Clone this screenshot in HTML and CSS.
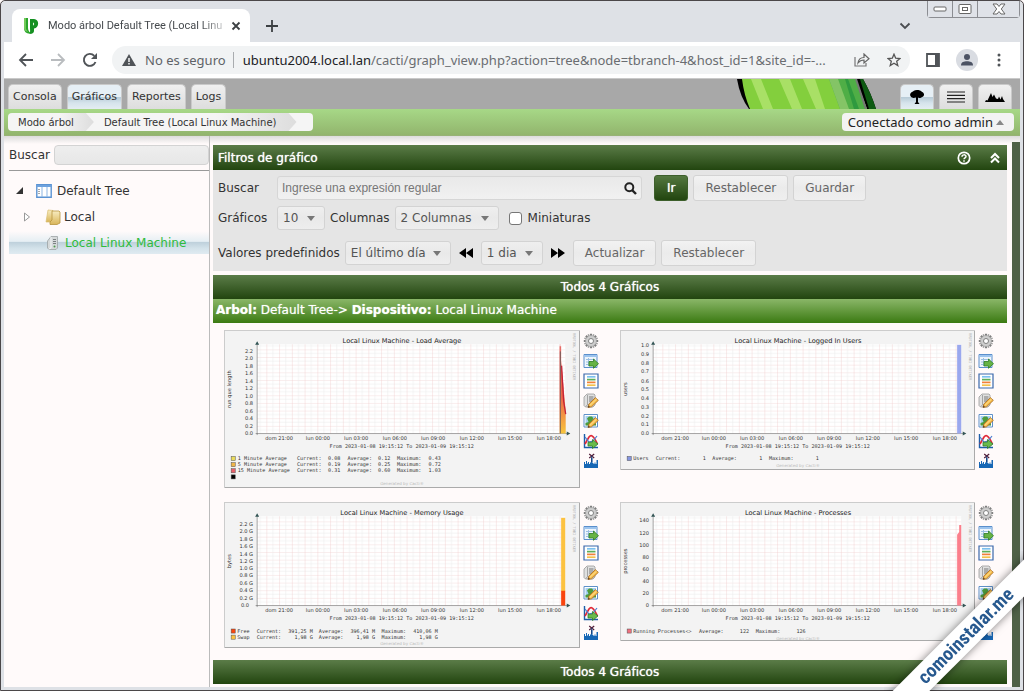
FILE: index.html
```html
<!DOCTYPE html>
<html lang="es">
<head>
<meta charset="utf-8">
<title>Modo árbol Default Tree (Local Linux Machine)</title>
<link rel="stylesheet" href="styles.css">
</head>
<body>
<svg class="defs" aria-hidden="true">
  <defs>
    <linearGradient id="g-load" x1="0" y1="0" x2="0" y2="1"><stop offset="0" stop-color="#e2554f"/><stop offset=".6" stop-color="#ee6a4a"/><stop offset="1" stop-color="#f7c53c"/></linearGradient>
    <linearGradient id="g-folder" x1="0" y1="0" x2="0" y2="1"><stop offset="0" stop-color="#f8ecc0"/><stop offset="1" stop-color="#d9b559"/></linearGradient>
    <pattern id="p-hours" x="83" y="0" width="25" height="200" patternUnits="userSpaceOnUse">
      <path d="M.5 0V200" stroke="#f2c9c9"/><path d="M13 0V200" stroke="#e9e9e9"/>
    </pattern>
    <pattern id="p-rows" x="0" y="203" width="10" height="15" patternUnits="userSpaceOnUse">
      <path d="M0 .5H10" stroke="#f3d6d6"/><path d="M0 8H10" stroke="#ededed"/>
    </pattern>
    <symbol id="plot" viewBox="0 0 697 220">
      <path fill="#fff" d="M65 28H669V203H65z"/>
      <path fill="url(#p-rows)" d="M65 28H669V203H65z"/>
      <path fill="url(#p-hours)" d="M65 28H669V203H65z"/>
      <path d="M65 26V206M62 203H674" stroke="#555" fill="none"/>
      <path d="M61 29L65 22L69 29zM672 199L679 203L672 207z" fill="#355"/>
    </symbol>
    <symbol id="i-gear" viewBox="0 0 16 16">
      <path d="M8 .8V15.200M.8 8H15.200M2.900 2.900L13.100 13.100M13.100 2.900L2.900 13.100" stroke="#7f7f7f" stroke-width="2.200"/>
      <path d="M5.200 1.300L10.800 14.700M10.800 1.300L5.200 14.700M1.300 5.200L14.700 10.800M1.300 10.800L14.700 5.200" stroke="#a2a2a2" stroke-width="1.400"/>
      <circle cx="8" cy="8" r="5.400" fill="#cdcdcd" stroke="#a8a8a8" stroke-width=".6"/><circle cx="8" cy="8" r="2.500" fill="#fff" stroke="#808080"/>
    </symbol>
    <symbol id="i-export" viewBox="0 0 16 16">
      <path d="M1 1.500H14V14.500H1z" fill="#eef5fc" stroke="#5a8fcc"/><path d="M1.500 2H13.500V4H1.500z" fill="#9dc4ee"/>
      <path d="M3 6.500H12M3 9H9M3 11.500H8M5.500 5V13" stroke="#9bbfe2"/>
      <path d="M6 8.500H10.500V6L15.500 10.700L10.500 15.300V13H6z" fill="#66b345" stroke="#2f7d24" stroke-width=".8"/>
    </symbol>
    <symbol id="i-list" viewBox="0 0 16 16">
      <path d="M1 1H15V15H1z" fill="#fff" stroke="#3a68ab" stroke-width="1.200"/>
      <path d="M4 3.800H12.500" stroke="#7cc0ee" stroke-width="1.700"/><path d="M4 6.600H12.500" stroke="#5dae58" stroke-width="1.700"/>
      <path d="M4 9.400H12.500" stroke="#f0813a" stroke-width="1.700"/><path d="M4 12.200H12.500" stroke="#f3c14b" stroke-width="1.700"/>
    </symbol>
    <symbol id="i-pencil" viewBox="0 0 16 16">
      <path d="M5 14.500L5.800 11L12.500 4.600L15.300 7.400L8.500 13.800z" fill="#f6bd4a" stroke="#a4661f" stroke-width=".8"/>
      <path d="M7 12.300L13.600 6" stroke="#fde3a0"/><path d="M5 14.500L5.400 12.500L7 14z" fill="#4a3a2a"/>
    </symbol>
    <symbol id="i-device-edit" viewBox="0 0 16 16">
      <path d="M4 1H11L12 2V12L10 14H2.500L1 12.500V4z" fill="#e0e0e0" stroke="#999" stroke-width=".8"/><path d="M4.500 2V12L2.500 13.500" stroke="#a5a5a5" fill="none"/><path d="M6 4H10.500M6 6H10.500M6 8H9" stroke="#777"/>
      <use href="#i-pencil"/>
    </symbol>
    <symbol id="i-image-edit" viewBox="0 0 16 16">
      <path d="M1 1.500H14.500V14H1z" fill="#fff" stroke="#5f91c9"/><path d="M2.500 3H13V12.500H2.500z" fill="#a6d0f1"/>
      <path d="M2.500 12.500V10L5.500 9L5 7.500L4 5.500L6 3.500L9 3.500L10.500 5.500L9 8L13 10.500V12.500z" fill="#4e9b3c"/>
      <use href="#i-pencil"/>
    </symbol>
    <symbol id="i-trend" viewBox="0 0 16 16">
      <path d="M1.500 1V14.500H15" stroke="#1d5fa8" stroke-width="1.400" fill="none"/>
      <path d="M2 11L6 4C8 1.500 10 1.800 14.500 11" stroke="#e02a38" stroke-width="1.700" fill="none"/>
      <path d="M2 4L6 9L10 8L14 3" stroke="#4a7ed0" stroke-width="1.200" fill="none"/>
      <path d="M5 9.200H9.500V6.500L15 11L9.500 15.500V13H5z" fill="#6abb4b" stroke="#2d7b2c" stroke-width=".8"/>
    </symbol>
    <symbol id="i-spike" viewBox="0 0 16 16">
      <path d="M1 15V9H2V11H3V8H4V10.500H5V9H6V11H7V9.500H8V5H9.500V10H10.500V11H11.500V9.500H12.500V11H13.500V7H15V15z" fill="#1767b5"/>
      <path d="M6.200 1L11.200 5M11.200 1L6.200 5" stroke="#501c38" stroke-width="1.200"/><path d="M8.700 3V9" stroke="#1d3f78"/>
    </symbol>
  </defs>
</svg>

<div class="window">
  <header class="tabstrip">
    <div class="tab">
      <svg class="favicon" viewBox="0 0 16 18"><path d="M1 1H5V11C5 14 7 16 9 16.500C4 17.500 1 15 1 11z" fill="#2aa52b"/><path d="M7 2H11C16.500 2 16.500 11 11 11.500V14C11 16 9 17 6.500 16.500C7.500 15 7 13 7 11z" fill="#159022"/><path d="M10 5.500C11.500 5.500 11.500 8.500 10 8.500z" fill="#e8f6e4"/><path d="M1 1H3V12L5 15C2 14 1 13 1 11z" fill="#72c95a"/></svg>
      <span class="tab-title">Modo árbol Default Tree (Local Linu</span>
      <button class="bare" aria-label="Cerrar pestaña"><svg width="10" height="10" viewBox="0 0 10 10"><path d="M1.500 1.500L8.500 8.500M8.500 1.500L1.500 8.500" stroke="#3c4043" stroke-width="1.800"/></svg></button>
    </div>
    <button class="bare newtab" aria-label="Nueva pestaña"><svg width="12" height="12" viewBox="0 0 12 12"><path d="M6 0V12M0 6H12" stroke="#3c4043" stroke-width="1.800"/></svg></button>
    <button class="bare chevron" aria-label="Buscar pestañas"><svg width="12" height="8" viewBox="0 0 12 8"><path d="M1.500 1.500L6 6L10.500 1.500" fill="none" stroke="#4a4d51" stroke-width="1.800"/></svg></button>
    <div class="winbuttons">
      <button aria-label="Minimizar"><svg width="14" height="6" viewBox="0 0 14 6"><rect x="1" y="1" width="12" height="4" rx="1" fill="#fff" stroke="#666"/></svg></button>
      <button aria-label="Maximizar"><svg width="14" height="10" viewBox="0 0 14 10"><rect x="1" y=".5" width="12" height="9" rx="1" fill="#fff" stroke="#666"/><rect x="4.500" y="3.500" width="5" height="3" fill="#fff" stroke="#666"/></svg></button>
      <button class="wide" aria-label="Cerrar"><svg width="14" height="12" viewBox="0 0 14 12"><path d="M1 1H5L7 3.500L9 1H13L9.300 6L13 11H9L7 8.500L5 11H1L4.700 6z" fill="#fff" stroke="#666"/></svg></button>
    </div>
  </header>

  <div class="toolbar">
    <button class="bare tool" aria-label="Atrás"><svg width="16" height="14" viewBox="0 0 16 14"><path d="M15 7H2M8 1L2 7L8 13" fill="none" stroke="#505458" stroke-width="1.800"/></svg></button>
    <button class="bare tool" aria-label="Adelante"><svg width="16" height="14" viewBox="0 0 16 14"><path d="M1 7H14M8 1L14 7L8 13" fill="none" stroke="#b9bcbf" stroke-width="1.800"/></svg></button>
    <button class="bare tool" aria-label="Recargar"><svg width="16" height="16" viewBox="0 0 16 16"><path d="M13.500 10A6 6 0 1 1 12.300 3.800" fill="none" stroke="#505458" stroke-width="1.900"/><path d="M15 1V7H9z" fill="#505458"/></svg></button>
    <div class="omnibox">
      <svg width="14" height="14" viewBox="0 0 14 14"><path d="M7 1L14 13H0z" fill="#505458"/><path d="M7 5V9M7 10V11.500" stroke="#fff" stroke-width="1.400"/></svg>
      <span class="insecure">No es seguro</span>
      <span class="bar"></span>
      <span class="url"><b>ubuntu2004.local.lan</b>/cacti/graph_view.php?action=tree&amp;node=tbranch-4&amp;host_id=1&amp;site_id=-...</span>
      <button class="bare share" aria-label="Compartir"><svg width="16" height="14" viewBox="0 0 16 14"><path d="M1 4V13H12V10" fill="none" stroke="#777" stroke-width="1.200"/><path d="M4 10C4.500 6 7 4.500 10 4.500V1L15 5.800L10 10V7C7 7 5.500 8 4 10z" fill="none" stroke="#666" stroke-width="1.200"/></svg></button>
      <button class="bare star" aria-label="Favorito"><svg width="14" height="14" viewBox="0 0 14 14"><path d="M7 1.200L8.700 5.200L13 5.500L9.700 8.300L10.800 12.600L7 10.300L3.200 12.600L4.300 8.300L1 5.500L5.300 5.200z" fill="none" stroke="#555" stroke-width="1.300"/></svg></button>
    </div>
    <button class="bare" aria-label="Panel lateral"><svg width="14" height="14" viewBox="0 0 14 14"><path d="M1 1H13V13H1z" fill="#fff" stroke="#505458" stroke-width="1.800"/><path d="M9 1H13V13H9z" fill="#505458"/></svg></button>
    <button class="bare" aria-label="Perfil"><svg width="22" height="22" viewBox="0 0 22 22"><circle cx="11" cy="11" r="11" fill="#d9dce2"/><circle cx="11" cy="8" r="3" fill="#4c5364"/><path d="M5 16.500C5 13 8 12.300 11 12.300S17 13 17 16.500z" fill="#4c5364"/></svg></button>
    <button class="bare dots" aria-label="Menú"><svg width="4" height="14" viewBox="0 0 4 14"><circle cx="2" cy="2" r="1.500" fill="#505458"/><circle cx="2" cy="7" r="1.500" fill="#505458"/><circle cx="2" cy="12" r="1.500" fill="#505458"/></svg></button>
  </div>

  <nav class="appbar">
    <a class="apptab" href="#">Consola</a>
    <a class="apptab selected" href="#">Gráficos</a>
    <a class="apptab" href="#">Reportes</a>
    <a class="apptab" href="#">Logs</a>
    <svg class="cactus" viewBox="0 0 140 30" aria-hidden="true">
      <path d="M0 0H126Q134 14 139 30H12Q3 18 0 0z" fill="#000"/>
      <path d="M126 0Q134 14 139 30H132L123 0z" fill="#0e5a12"/>
      <path d="M5 0H119Q124 14 130 30H13Q7 16 5 0z" fill="#83cf3d"/>
      <path d="M14 0H24L36 30H26zM42 0H53L65 30H55zM66 0H78L88 30H79z" fill="#a9e066"/>
      <path d="M92 0H119L130 30H103z" fill="#4fae46"/><path d="M92 0H101L112 30H103z" fill="#84c466"/><path d="M108 0H111L122 30H117z" fill="#2f9a3f"/>
      <path d="M119 0L129 30" stroke="#777" stroke-width="2"/>
    </svg>
    <a class="apptab pic selected" href="#" aria-label="Árbol"><svg width="16" height="16" viewBox="0 0 16 16"><path d="M8 1C5 1 4.500 2.500 3 3C.5 4 .5 7.500 3 8.500C4.500 9.500 6 8.500 7 8.500V13L5.500 15H10.500L9 13V8.500C11 9.500 12 9 13 8C16 7.500 15.500 3.500 13 3C12 1.500 10 1 8 1z"/></svg></a>
    <a class="apptab pic" href="#" aria-label="Lista"><svg width="18" height="12" viewBox="0 0 18 12"><path d="M0 1H18M0 4.300H18M0 7.700H18M0 11H18" stroke="#222" stroke-width="1.200"/></svg></a>
    <a class="apptab pic" href="#" aria-label="Vista previa"><svg width="20" height="10" viewBox="0 0 20 10"><path d="M0 10L1 8L2.500 8.500L6 1L7.500 5L9 2.500L11 6.500L13 7L14 4.500L15.500 7.500L17 4L18 7L20 10z"/></svg></a>
  </nav>

  <div class="crumbbar">
    <ol class="crumbs">
      <li><a href="#">Modo árbol</a></li>
      <li><a href="#">Default Tree (Local Linux Machine)</a></li>
    </ol>
    <button class="user">Conectado como admin <svg width="8" height="5" viewBox="0 0 8 5"><path d="M0 5L4 0L8 5z" fill="#888"/></svg></button>
  </div>

  <div class="body">
    <aside class="side">
      <div class="side-search"><label for="tree-q">Buscar</label><input id="tree-q" type="text"></div>
      <ul class="tree">
        <li class="l1"><svg width="8" height="8" viewBox="0 0 8 8"><path d="M7 0V7H0z" fill="#333"/></svg>
          <svg width="16" height="14" viewBox="0 0 16 14"><path d="M.8.800H15.200V13.200H.8z" fill="#fff" stroke="#5b93d3" stroke-width="1.400"/><path d="M1 1H15V3H1z" fill="#6ea2de"/><path d="M6 3V13M11 3V13" stroke="#8db5e4"/><path d="M3 5V11" stroke="#555" stroke-dasharray="1 1"/></svg>
          <a href="#">Default Tree</a></li>
        <li class="l2"><svg width="8" height="10" viewBox="0 0 8 10"><path d="M1.500 1L6.500 5L1.500 9z" fill="#fff" stroke="#999"/></svg>
          <svg width="16" height="16" viewBox="0 0 16 16"><path d="M3 1L8 1.500V11L6 13H1z" fill="url(#g-folder)" stroke="#d8bd70" stroke-width=".7"/><path d="M7 2H14L15 3V14L12 15.500H5V13L7 11z" fill="url(#g-folder)" stroke="#b8943f" stroke-width=".8"/></svg>
          <a href="#">Local</a></li>
        <li class="l3"><svg width="16" height="16" viewBox="0 0 16 16"><path d="M6 1.500H12.500V13L11 14.500H4L2.500 13V6z" fill="#d5d9da" stroke="#9da3a5" stroke-width=".8"/><path d="M6 2V13L4 14" stroke="#f4f6f6" fill="none"/><path d="M8 4.500H11M8 6.500H11M8 8.500H11" stroke="#7b8082"/><circle cx="9.500" cy="11.500" r="1" fill="#4c9a4c"/></svg>
          <a href="#">Local Linux Machine</a></li>
      </ul>
    </aside>

    <main class="main">
      <h1 class="bar-dark bar-title"><span>Filtros de gráfico</span>
        <a href="#" aria-label="Ayuda"><svg width="14" height="14" viewBox="0 0 14 14"><circle cx="7" cy="7" r="5.700" fill="none" stroke="#fff" stroke-width="1.700"/><path d="M5 5.700C5 3.300 9 3.300 9 5.500C9 7 7 6.800 7 8.300M7 9.300V10.700" fill="none" stroke="#fff" stroke-width="1.500"/></svg></a>
        <a href="#" aria-label="Plegar"><svg width="10" height="12" viewBox="0 0 10 12"><path d="M1 6L5 2L9 6M1 10.500L5 6.500L9 10.500" fill="none" stroke="#fff" stroke-width="2"/></svg></a>
      </h1>
      <form class="filters" onsubmit="return false">
        <div class="frow">
          <label class="lead" for="q">Buscar</label>
          <span class="search"><input id="q" type="text" placeholder="Ingrese una expresión regular"><svg width="13" height="13" viewBox="0 0 13 13"><circle cx="5.300" cy="5.300" r="4" fill="none" stroke="#222" stroke-width="2"/><path d="M8 8L12 12" stroke="#222" stroke-width="2.400"/></svg></span>
          <button class="btn go">Ir</button><button class="btn">Restablecer</button><button class="btn">Guardar</button>
        </div>
        <div class="frow">
          <label class="lead" for="n">Gráficos</label>
          <span class="sel w-n"><select id="n"><option>10</option></select></span>
          <label for="cols">Columnas</label>
          <span class="sel w-c"><select id="cols"><option>2 Columnas</option></select></span>
          <label class="check"><input type="checkbox"> Miniaturas</label>
        </div>
        <div class="frow second">
          <label for="preset">Valores predefinidos</label>
          <span class="sel w-p"><select id="preset"><option>El último día</option></select></span>
          <button class="bare shift" aria-label="Retroceder"><svg width="14" height="10" viewBox="0 0 14 10"><path d="M7 0V10L0 5zM14 0V10L7 5z"/></svg></button>
          <span class="sel w-d"><select aria-label="Intervalo"><option>1 dia</option></select></span>
          <button class="bare shift" aria-label="Avanzar"><svg width="14" height="10" viewBox="0 0 14 10"><path d="M0 0V10L7 5zM7 0V10L14 5z"/></svg></button>
          <button class="btn">Actualizar</button><button class="btn">Restablecer</button>
        </div>
      </form>

      <div class="bar-dark bar-count">Todos 4 Gráficos</div>
      <h2 class="bar-green"><b>Arbol:</b> Default Tree-&gt; <b>Dispositivo:</b> Local Linux Machine</h2>

      <div class="graphs">
        <article class="graph">
          <svg class="chart" viewBox="0 0 697 309">
            <use href="#plot" width="697" height="220"/>
            <path d="M658 203V32H661V60L670 160V203z" fill="url(#g-load)"/><path d="M659 203V28" stroke="#f2a0a0"/><path d="M659.500 203V42" stroke="#555" stroke-width="1.500"/><path d="M662 70L666 140L670 165" stroke="#c22338" stroke-width="2.500" fill="none"/>
            <text class="t" x="349" y="25">Local Linux Machine - Load Average</text>
            <g class="y"><text x="57" y="206">0.0</text><text x="57" y="192">0.2</text><text x="57" y="177">0.4</text><text x="57" y="162">0.6</text><text x="57" y="148">0.8</text><text x="57" y="133">1.0</text><text x="57" y="118">1.2</text><text x="57" y="104">1.4</text><text x="57" y="89">1.6</text><text x="57" y="74">1.8</text><text x="57" y="59">2.0</text><text x="57" y="45">2.2</text></g>
            <g class="x"><text x="108" y="215">dom 21:00</text><text x="184" y="215">lun 00:00</text><text x="259" y="215">lun 03:00</text><text x="335" y="215">lun 06:00</text><text x="410" y="215">lun 09:00</text><text x="486" y="215">lun 12:00</text><text x="561" y="215">lun 15:00</text><text x="637" y="215">lun 18:00</text></g>
            <text class="v" transform="translate(13 116) rotate(-90)">run que length</text>
            <text class="w" transform="translate(684 6) rotate(90)">RRDTOOL / TOBI OETIKER</text>
            <text class="m" x="207" y="231">From 2023-01-08 19:15:12 To 2023-01-09 19:15:12</text>
            <g class="k"><rect x="14" y="248" width="8" height="8" fill="#eadb5c"/><rect x="14" y="260" width="8" height="8" fill="#efb548"/><rect x="14" y="272" width="8" height="8" fill="#e8606a"/><rect x="14" y="284" width="8" height="8"/></g>
            <g class="m"><text x="27" y="255">1 Minute Average</text><text x="143" y="255">Current:</text><text x="204" y="255">0.08</text><text x="242" y="255">Average:</text><text x="302" y="255">0.12</text><text x="339" y="255">Maximum:</text><text x="401" y="255">0.43</text>
            <text x="27" y="267">5 Minute Average</text><text x="143" y="267">Current:</text><text x="204" y="267">0.19</text><text x="242" y="267">Average:</text><text x="302" y="267">0.25</text><text x="339" y="267">Maximum:</text><text x="401" y="267">0.72</text>
            <text x="27" y="279">15 Minute Average</text><text x="143" y="279">Current:</text><text x="204" y="279">0.31</text><text x="242" y="279">Average:</text><text x="302" y="279">0.60</text><text x="339" y="279">Maximum:</text><text x="401" y="279">1.03</text></g>
            <text class="f" x="349" y="304">Generated by Cacti®</text>
          </svg>
          <div class="tools">
            <a href="#" aria-label="Opciones"><svg><use href="#i-gear"/></svg></a><a href="#" aria-label="Exportar CSV"><svg><use href="#i-export"/></svg></a><a href="#" aria-label="Intervalos"><svg><use href="#i-list"/></svg></a><a href="#" aria-label="Editar dispositivo"><svg><use href="#i-device-edit"/></svg></a><a href="#" aria-label="Editar plantilla"><svg><use href="#i-image-edit"/></svg></a><a href="#" aria-label="Tiempo real"><svg><use href="#i-trend"/></svg></a><a href="#" aria-label="Eliminar picos"><svg><use href="#i-spike"/></svg></a>
          </div>
        </article>

        <article class="graph">
          <svg class="chart" viewBox="0 0 697 274">
            <use href="#plot" width="697" height="220"/>
            <path d="M661 29H669V203H661z" fill="#9aa8ee"/>
            <text class="t" x="349" y="25">Local Linux Machine - Logged In Users</text>
            <g class="y"><text x="57" y="206">0.0</text><text x="57" y="189">0.1</text><text x="57" y="172">0.2</text><text x="57" y="154">0.3</text><text x="57" y="137">0.4</text><text x="57" y="120">0.5</text><text x="57" y="103">0.6</text><text x="57" y="85">0.7</text><text x="57" y="68">0.8</text><text x="57" y="51">0.9</text><text x="57" y="34">1.0</text></g>
            <g class="x"><text x="108" y="215">dom 21:00</text><text x="184" y="215">lun 00:00</text><text x="259" y="215">lun 03:00</text><text x="335" y="215">lun 06:00</text><text x="410" y="215">lun 09:00</text><text x="486" y="215">lun 12:00</text><text x="561" y="215">lun 15:00</text><text x="637" y="215">lun 18:00</text></g>
            <text class="v" transform="translate(13 116) rotate(-90)">users</text>
            <text class="w" transform="translate(684 6) rotate(90)">RRDTOOL / TOBI OETIKER</text>
            <text class="m" x="207" y="231">From 2023-01-08 19:15:12 To 2023-01-09 19:15:12</text>
            <g class="k"><rect x="14" y="248" width="8" height="8" fill="#8495e2"/></g>
            <g class="m"><text x="26" y="255">Users</text><text x="70" y="255">Current:</text><text x="162" y="255">1</text><text x="181" y="255">Average:</text><text x="273" y="255">1</text><text x="292" y="255">Maximum:</text><text x="384" y="255">1</text></g>
            <text class="f" x="349" y="269">Generated by Cacti®</text>
          </svg>
          <div class="tools">
            <a href="#" aria-label="Opciones"><svg><use href="#i-gear"/></svg></a><a href="#" aria-label="Exportar CSV"><svg><use href="#i-export"/></svg></a><a href="#" aria-label="Intervalos"><svg><use href="#i-list"/></svg></a><a href="#" aria-label="Editar dispositivo"><svg><use href="#i-device-edit"/></svg></a><a href="#" aria-label="Editar plantilla"><svg><use href="#i-image-edit"/></svg></a><a href="#" aria-label="Tiempo real"><svg><use href="#i-trend"/></svg></a><a href="#" aria-label="Eliminar picos"><svg><use href="#i-spike"/></svg></a>
          </div>
        </article>

        <article class="graph">
          <svg class="chart" viewBox="0 0 697 288">
            <use href="#plot" width="697" height="220"/>
            <path d="M661 31H669V175H661z" fill="#fcc240"/><path d="M661 174H669V203H661z" fill="#f9450f"/>
            <text class="t" x="349" y="25">Local Linux Machine - Memory Usage</text>
            <g class="y"><text x="49" y="206">0.0</text><text x="57" y="192">0.2 G</text><text x="57" y="177">0.4 G</text><text x="57" y="163">0.6 G</text><text x="57" y="148">0.8 G</text><text x="57" y="134">1.0 G</text><text x="57" y="119">1.2 G</text><text x="57" y="105">1.4 G</text><text x="57" y="90">1.6 G</text><text x="57" y="76">1.8 G</text><text x="57" y="61">2.0 G</text><text x="57" y="47">2.2 G</text></g>
            <g class="x"><text x="108" y="215">dom 21:00</text><text x="184" y="215">lun 00:00</text><text x="259" y="215">lun 03:00</text><text x="335" y="215">lun 06:00</text><text x="410" y="215">lun 09:00</text><text x="486" y="215">lun 12:00</text><text x="561" y="215">lun 15:00</text><text x="637" y="215">lun 18:00</text></g>
            <text class="v" transform="translate(13 116) rotate(-90)">bytes</text>
            <text class="w" transform="translate(684 6) rotate(90)">RRDTOOL / TOBI OETIKER</text>
            <text class="m" x="207" y="231">From 2023-01-08 19:15:12 To 2023-01-09 19:15:12</text>
            <g class="k"><rect x="14" y="249" width="8" height="8" fill="#f9450f"/><rect x="14" y="261" width="8" height="8" fill="#fcc240"/></g>
            <g class="m"><text x="26" y="256">Free</text><text x="64" y="256">Current:</text><text x="126" y="256">391,25 M</text><text x="186" y="256">Average:</text><text x="248" y="256">396,41 M</text><text x="309" y="256">Maximum:</text><text x="371" y="256">410,06 M</text>
            <text x="26" y="268">Swap</text><text x="64" y="268">Current:</text><text x="138" y="268">1,98 G</text><text x="186" y="268">Average:</text><text x="260" y="268">1,98 G</text><text x="309" y="268">Maximum:</text><text x="383" y="268">1,98 G</text></g>
            <text class="f" x="349" y="281">Generated by Cacti®</text>
          </svg>
          <div class="tools">
            <a href="#" aria-label="Opciones"><svg><use href="#i-gear"/></svg></a><a href="#" aria-label="Exportar CSV"><svg><use href="#i-export"/></svg></a><a href="#" aria-label="Intervalos"><svg><use href="#i-list"/></svg></a><a href="#" aria-label="Editar dispositivo"><svg><use href="#i-device-edit"/></svg></a><a href="#" aria-label="Editar plantilla"><svg><use href="#i-image-edit"/></svg></a><a href="#" aria-label="Tiempo real"><svg><use href="#i-trend"/></svg></a><a href="#" aria-label="Eliminar picos"><svg><use href="#i-spike"/></svg></a>
          </div>
        </article>

        <article class="graph">
          <svg class="chart" viewBox="0 0 697 274">
            <use href="#plot" width="697" height="220"/>
            <path d="M661 203V64L665 59V45H669V203z" fill="#fb7f8c"/>
            <text class="t" x="349" y="25">Local Linux Machine - Processes</text>
            <g class="y"><text x="57" y="206">0</text><text x="57" y="183">20</text><text x="57" y="159">40</text><text x="57" y="135">60</text><text x="57" y="111">80</text><text x="57" y="88">100</text><text x="57" y="64">120</text><text x="57" y="40">140</text></g>
            <g class="x"><text x="108" y="215">dom 21:00</text><text x="184" y="215">lun 00:00</text><text x="259" y="215">lun 03:00</text><text x="335" y="215">lun 06:00</text><text x="410" y="215">lun 09:00</text><text x="486" y="215">lun 12:00</text><text x="561" y="215">lun 15:00</text><text x="637" y="215">lun 18:00</text></g>
            <text class="v" transform="translate(13 116) rotate(-90)">processes</text>
            <text class="w" transform="translate(684 6) rotate(90)">RRDTOOL / TOBI OETIKER</text>
            <text class="m" x="207" y="231">From 2023-01-08 19:15:12 To 2023-01-09 19:15:12</text>
            <g class="k"><rect x="14" y="249" width="8" height="8" fill="#f0707e"/></g>
            <g class="m"><text x="26" y="256">Running Processes&lt;&gt;</text><text x="155" y="256">Average:</text><text x="235" y="256">122</text><text x="266" y="256">Maximum:</text><text x="346" y="256">126</text></g>
            <text class="f" x="349" y="270">Generated by Cacti®</text>
          </svg>
          <div class="tools">
            <a href="#" aria-label="Opciones"><svg><use href="#i-gear"/></svg></a><a href="#" aria-label="Exportar CSV"><svg><use href="#i-export"/></svg></a><a href="#" aria-label="Intervalos"><svg><use href="#i-list"/></svg></a><a href="#" aria-label="Editar dispositivo"><svg><use href="#i-device-edit"/></svg></a><a href="#" aria-label="Editar plantilla"><svg><use href="#i-image-edit"/></svg></a><a href="#" aria-label="Tiempo real"><svg><use href="#i-trend"/></svg></a><a href="#" aria-label="Eliminar picos"><svg><use href="#i-spike"/></svg></a>
          </div>
        </article>
      </div>
      <div class="bar-dark bar-count">Todos 4 Gráficos</div>
    </main>
    <div class="edge"></div>
  </div>
</div>
<div class="ribbon"><span>comoinstalar.me</span></div>
</body>
</html>
```
FILE: styles.css
```css
* { box-sizing: border-box; }
body { margin: 0; font: 12px/16px "DejaVu Sans", Verdana, sans-serif; color: #333; background: #fffafa; }
a { color: inherit; text-decoration: none; }
svg { flex: none; display: block; }
button, input, select { font: inherit; color: inherit; }
.defs { position: absolute; width: 0; height: 0; }
.window { min-height: 100vh; display: flex; flex-direction: column; border: 1px solid #4b4749; border-radius: 5px 5px 0 0; box-shadow: inset 0 0 0 3px #dee1e6; padding: 0 3px 3px; background: #fffafa; }
.bare { border: 0; background: none; padding: 0; display: flex; align-items: center; justify-content: center; }

.tabstrip { background: #dee1e6; height: 41px; display: flex; align-items: flex-end; padding-left: 8px; }
.tab { width: 238px; height: 33px; background: #fff; border-radius: 8px 8px 0 0; display: flex; align-items: center; padding: 0 11px 0 11px; gap: 9px; }
.favicon { width: 16px; height: 18px; }
.tab-title { flex: 1; white-space: nowrap; font: 11px/16px Roboto, sans-serif; color: #45494d; -webkit-mask-image: linear-gradient(90deg, #000 88%, rgba(0, 0, 0, .3)); mask-image: linear-gradient(90deg, #000 88%, rgba(0, 0, 0, .3)); }
.newtab { margin-left: 16px; height: 33px; }
.chevron { margin-left: auto; height: 33px; }
.winbuttons { align-self: flex-start; display: flex; margin-left: 16px; border: 1px solid #8b8d92; border-top: 0; border-radius: 0 0 4px 4px; }
.winbuttons button { width: 25px; height: 16px; padding: 0; border: 0; border-right: 1px solid #8b8d92; background: #dfe2e8; display: flex; align-items: center; justify-content: center; }
.winbuttons .wide { width: 41px; border-right: 0; }

.toolbar { background: #fff; height: 37px; border-bottom: 1px solid #c9c9c9; display: flex; align-items: center; gap: 16px; padding: 0 19px 0 14px; font: 13px/18px "Noto Sans", sans-serif; }
.tool { width: 16px; }
.tool:nth-child(3) { margin-right: -2px; }
.omnibox { flex: 1; min-width: 0; height: 28px; border-radius: 14px; background: #f1f3f4; display: flex; align-items: center; padding: 0 9px 0 10px; color: #5f6368; }
.insecure { margin-left: 9px; white-space: nowrap; }
.bar { width: 1px; height: 16px; background: #a9acaf; margin: 0 9px 0 7px; }
.url { flex: 1; min-width: 0; white-space: nowrap; color: #6a6d71; }
.url b { font-weight: 400; color: #202124; }
.share { margin-left: 9px; }
.star { margin-left: 17px; }
.dots { width: 4px; margin-left: 3px; }

.appbar { background: #a8a8a8; height: 30px; display: flex; align-items: flex-end; gap: 5px; padding: 0 8px 0 4px; font-size: 11px; overflow: hidden; }
.apptab { height: 25px; padding: 0 4px; display: flex; align-items: center; border-radius: 5px 5px 0 0; background: linear-gradient(#f0f0f0, #e6e6e6 50%, #ddd); border: 1px solid #c9c9c9; border-bottom: 0; }
.apptab.selected { background: linear-gradient(#e6eff5 0, #e6eff5 48%, #b9ccd8 52%, #d6e4ec 75%, #e4edf2); }
.cactus { width: 140px; height: 30px; margin: 0 18px 0 auto; }
.apptab.pic { width: 34px; padding: 0; justify-content: center; }
.crumbbar { height: 27px; background: linear-gradient(#a7d887, #92b56d); border-bottom: 1px solid #97b276; display: flex; justify-content: space-between; align-items: flex-start; padding: 4px 6px 0 4px; }
.crumbs { list-style: none; margin: 0; padding: 0 16px 0 0; display: flex; background: #f5f5f5; border-radius: 4px; font-size: 10px; line-height: 16px; }
.crumbs a { display: block; padding: 2px 20px 0 10px; background: linear-gradient(90deg, transparent 60%, #ddd); clip-path: polygon(0 0, calc(100% - 8px) 0, 100% 50%, calc(100% - 8px) 100%, 0 100%); }
.user { height: 18px; margin: 0; border: 0; border-radius: 4px; background: #f3f3f3; padding: 0 10px 0 6px; color: #222; font: 13px/18px "Noto Sans", sans-serif; display: flex; align-items: center; gap: 3px; }

.body { flex: 1; display: flex; padding-left: 5px; background: linear-gradient(#dcdcdc, #fffafa 8px); }
.side { width: 201px; flex: none; border-right: 1px solid #bbb; padding-top: 9px; }
.side-search { display: flex; align-items: center; gap: 4px; padding-bottom: 5px; border-bottom: 1px solid #999; }
.side-search input { flex: 1; min-width: 0; height: 20px; border: 1px solid #d3d3d3; border-radius: 4px; background: linear-gradient(#eee, #e7e7e7); }
.tree { list-style: none; margin: 0; padding: 8px 0 0; }
.tree li { height: 23px; margin-bottom: 3px; display: flex; align-items: center; }
.l1 { padding-left: 7px; }
.l1 svg + svg { margin: 0 5px 0 12px; }
.l2 { padding-left: 14px; }
.l2 svg + svg { margin: 0 3px 0 14px; }
.l3 { padding-left: 36px; color: #2fbb3c; background: linear-gradient(#fffafa, #e6eff4 45%, #bfd1dc 50%, #d3e2ea 75%, #e0ebf1); }
.l3 svg { margin-right: 4px; }

.main { flex: 1; min-width: 0; margin-left: 3px; padding: 9px 0 1px; }
.edge { width: 8px; margin: 6px 0 0 5px; background: #4f6147; }
.bar-dark { background: linear-gradient(#5b7c48, #22450f); color: #fff; font: 12px/16px "DejaVu Sans", sans-serif; text-shadow: 0 0 1px #fff; display: flex; align-items: center; }
.bar-title { height: 25px; margin: 0; padding: 0 7px 0 5px; gap: 19px; }
.bar-title span { flex: 1; }
.bar-count { height: 24px; justify-content: center; }
.bar-green { margin: 0; padding: 0 3px; height: 24px; font: 12px/23px "DejaVu Sans", sans-serif; color: #fff; text-shadow: 0 0 1px #cfe2c0; background: linear-gradient(#8ab668, #3b7a12); }
.filters { background: #e5e5e5; margin-bottom: 4px; padding: 5px 5px 5px; display: flex; flex-direction: column; gap: 4px; }
.frow { display: flex; align-items: center; gap: 5px; height: 26px; }
.frow.second { margin-top: 5px; }
.lead { width: 54px; }
.search { width: 365px; height: 24px; display: flex; align-items: center; padding: 0 4px; border: 1px solid #d6d6d6; border-radius: 3px; background: linear-gradient(#e9e9e9, #f1f1f1); margin-right: 7px; }
.search input { flex: 1; min-width: 0; border: 0; padding: 0; background: none; font: 12px/16px "Liberation Sans", Arial, sans-serif; }
.search input::placeholder { color: #777; opacity: 1; }
.btn { height: 26px; padding: 0 11px; border: 1px solid #d3d3d3; border-radius: 3px; background: linear-gradient(#f2f2f2, #ebebeb 50%, #efefef); color: #666; }
.btn.go { padding: 0 12px; background: linear-gradient(#53773f, #22450f); border-color: #3d5f2b; color: #fff; text-shadow: 0 0 1px #fff; }
.sel { position: relative; height: 24px; }
.sel select { width: 100%; height: 100%; appearance: none; border: 1px solid #d3d3d3; border-radius: 3px; background: linear-gradient(#efefef, #e9e9e9 50%, #eee); padding: 0 5px; color: #555; }
.sel::after { content: ""; position: absolute; right: 10px; top: 10px; border: 4px solid transparent; border-top: 5px solid #777; border-bottom: 0; pointer-events: none; }
.w-n { width: 48px; }
.w-c { width: 104px; }
.w-p { width: 106px; }
.w-d { width: 62px; }
.check { display: flex; align-items: center; gap: 6px; margin-left: 5px; }
.check input { appearance: none; width: 13px; height: 13px; margin: 0; border: 1px solid #767676; border-radius: 3px; background: #fff; }
.shift { width: 14px; margin: 0 3px; }

.graphs { display: grid; grid-template-columns: 1fr 1fr; row-gap: 14px; padding: 7px 3px 12px 0; }
.graph { display: flex; align-items: flex-start; gap: 3px; padding: 0 10px 0 11px; }
.chart { flex: 1; min-width: 0; height: auto; background: #f3f3f3; box-shadow: inset 1px 1px #ccc, inset -1px -1px #aaa; }
.chart text { font: 10px "DejaVu Sans", sans-serif; fill: #333; }
.chart .t { font-size: 13px; text-anchor: middle; fill: #222; }
.chart .v { text-anchor: middle; }
.chart .x text { text-anchor: middle; }
.chart .y text { text-anchor: end; }
.chart .m, .chart .m text { font-family: "DejaVu Sans Mono", monospace; }
.chart .w { font: 7px "DejaVu Sans Mono", monospace; fill: #aaa; }
.chart .f { font-size: 8px; text-anchor: middle; fill: #bbb; }
.chart .k rect { stroke: #555; }
.tools { width: 16px; padding-top: 3px; display: flex; flex-direction: column; gap: 4px; }
.tools svg { width: 16px; height: 16px; }

.ribbon { position: fixed; right: 0; bottom: 0; width: 140px; height: 140px; overflow: hidden; pointer-events: none; }
.ribbon span { position: absolute; left: -38px; top: 72px; width: 240px; text-align: center; background: #fff; color: #27598f; font: bold 19px/26px "Liberation Sans Narrow", "Roboto Condensed", "Open Sans Condensed", Roboto, sans-serif; transform: rotate(-45deg); box-shadow: 0 0 8px rgba(0, 0, 0, .5); }
```
